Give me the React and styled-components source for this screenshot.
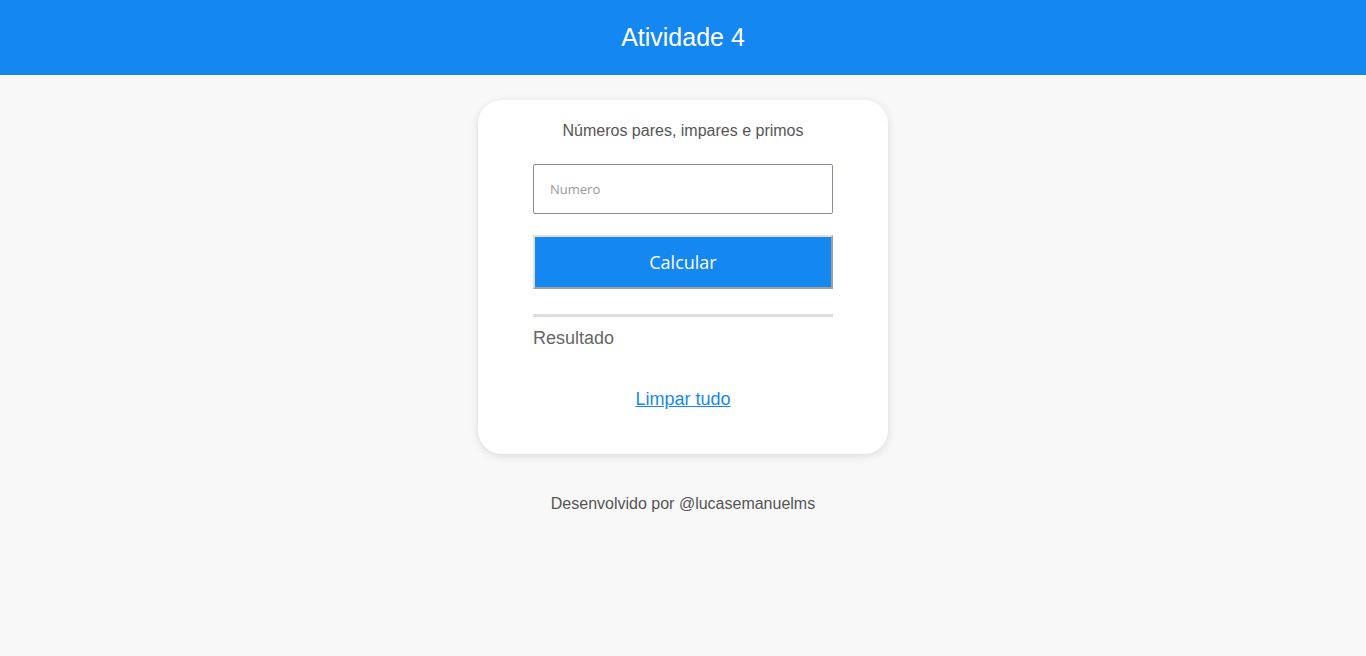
import React, { useState } from 'react';
import styled, { createGlobalStyle } from 'styled-components';

const GlobalStyle = createGlobalStyle`
  body {
    margin: 0;
    background-color: #f8f8f8;
    font-family: "Liberation Sans", Arial, sans-serif;
  }
`;

const Header = styled.header`
  height: 75px;
  background-color: #1488f0;
  display: flex;
  align-items: center;
  justify-content: center;
`;

const Title = styled.h1`
  margin: 0;
  font-size: 25px;
  font-weight: 400;
  color: #ffffff;
`;

const Main = styled.main`
  display: flex;
  flex-direction: column;
  align-items: center;
  padding-top: 25px;
`;

const Card = styled.div`
  width: 410px;
  box-sizing: border-box;
  background: #ffffff;
  border-radius: 24px;
  box-shadow: 0 2px 8px rgba(0, 0, 0, 0.12);
  padding: 22px 55px 44px;
  display: flex;
  flex-direction: column;
`;

const CardTitle = styled.p`
  margin: 0 0 24px;
  text-align: center;
  font-size: 16px;
  color: #555555;
`;

const Input = styled.input`
  height: 50px;
  box-sizing: border-box;
  border: 1px solid #8c8a99;
  border-radius: 2px;
  padding: 0 16px;
  font-family: "Open Sans", sans-serif;
  font-size: 13px;
  color: #333;
  outline: none;

  &::placeholder {
    color: #9a9a9a;
  }
`;

const Button = styled.button`
  margin-top: 21px;
  height: 54px;
  background-color: #1488f0;
  color: #ffffff;
  border: 2px solid;
  border-color: #e0e0e0 #a0a0a0 #a0a0a0 #e0e0e0;
  font-family: "Open Sans", sans-serif;
  font-size: 18px;
  cursor: pointer;
`;

const Divider = styled.hr`
  width: 100%;
  margin: 25px 0 0;
  border: none;
  border-top: 3px solid #dddddd;
`;

const ResultLabel = styled.div`
  margin-top: 11px;
  font-size: 18px;
  color: #666666;
`;

const ClearLink = styled.a`
  margin-top: 40px;
  align-self: center;
  font-size: 18px;
  color: #1488f0;
  text-decoration: underline;
  cursor: pointer;
`;

const Footer = styled.footer`
  margin-top: 41px;
  font-size: 16px;
  color: #555555;
`;

export default function App() {
  const [value, setValue] = useState('');
  const [result, setResult] = useState('');

  return (
    <>
      <GlobalStyle />
      <Header>
        <Title>Atividade 4</Title>
      </Header>
      <Main>
        <Card>
          <CardTitle>Números pares, impares e primos</CardTitle>
          <Input
            type="number"
            placeholder="Numero"
            value={value}
            onChange={(e) => setValue(e.target.value)}
          />
          <Button onClick={() => setResult(value)}>Calcular</Button>
          <Divider />
          <ResultLabel>Resultado{result ? `: ${result}` : ''}</ResultLabel>
          <ClearLink onClick={() => { setValue(''); setResult(''); }}>Limpar tudo</ClearLink>
        </Card>
        <Footer>Desenvolvido por @lucasemanuelms</Footer>
      </Main>
    </>
  );
}
